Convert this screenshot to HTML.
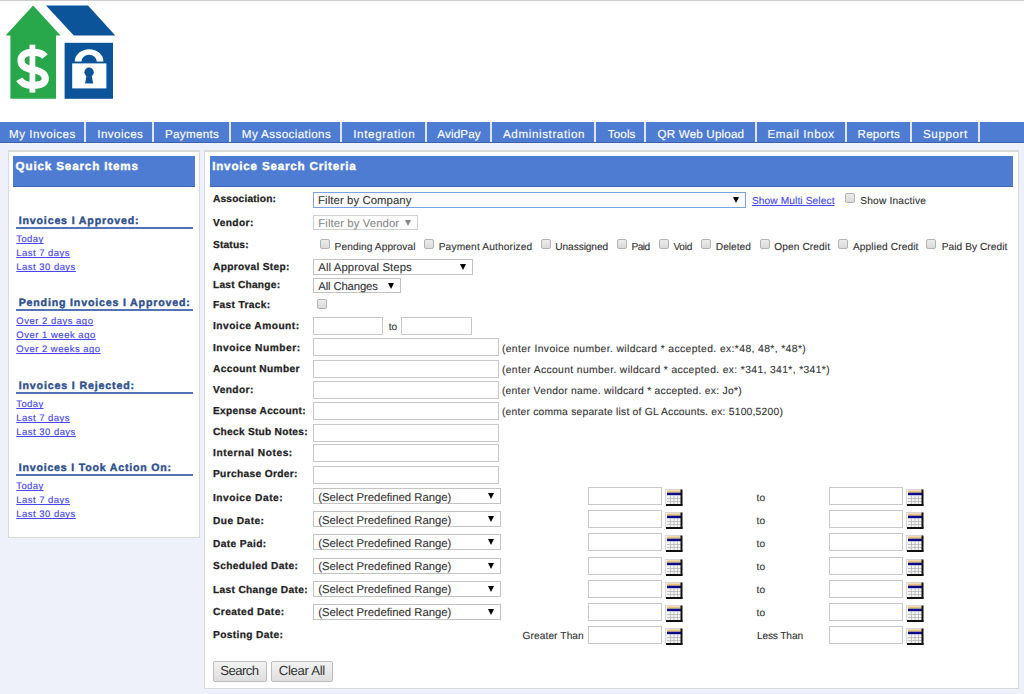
<!DOCTYPE html>
<html><head><meta charset="utf-8"><style>
html,body{margin:0;padding:0}
body{width:1024px;height:694px;overflow:hidden;position:relative;background:#fff;font-family:"Liberation Sans", sans-serif}
.t{position:absolute;white-space:nowrap;line-height:1;text-rendering:geometricPrecision}
.b{position:absolute}
</style></head><body>
<div class="b" style="left:0px;top:0px;width:1024px;height:1px;background:#cccccc"></div>
<svg class="b" style="left:0;top:0" width="120" height="104" viewBox="0 0 120 104">
<polygon fill="#28a84a" points="33.1,5.5 60.6,35.4 56,35.4 56,98.8 10.4,98.8 10.4,35.4 5.6,35.4"/>
<polygon fill="#0c5499" points="46,5.6 88,5.6 115.3,35.4 73.8,35.4"/>
<rect fill="#0c5499" x="64.6" y="42.8" width="48.4" height="56"/>
<path fill="#fff" d="M74.8,61.4 A14.3,12.2 0 0 1 103.4,61.4 L96.7,61.4 A7.6,6.6 0 0 0 81.5,61.4 Z"/>
<rect fill="#fff" x="72.2" y="63.4" width="34.2" height="25"/>
<circle fill="#0c5499" cx="89.1" cy="72.3" r="4.7"/>
<polygon fill="#0c5499" points="86.8,74 91.4,74 93.2,83.5 85,83.5"/>
<path fill="none" stroke="#fff" stroke-width="7.1" d="M45,56.5 C42.5,53.5 38,52.3 32.5,52.3 C25,52.3 21,55.5 21,60.5 C21,66 25,68 32.5,69.6 C41,71.2 45.3,73.5 45.3,78.6 C45.3,83.5 40,85.4 32.5,85.4 C26,85.4 21.5,83 19.3,79.2"/>
<rect fill="#fff" x="29.5" y="44.7" width="5.8" height="47.9"/>
</svg>
<div class="b" style="left:0px;top:143px;width:1024px;height:551px;background:#eef1fa"></div>
<div class="b" style="left:0px;top:122px;width:1024px;height:20px;background:#4e7cd2"></div>
<div class="b" style="left:0px;top:142px;width:1024px;height:1px;background:#3c63b0"></div>
<div class="b" style="left:84px;top:122px;width:2px;height:20px;background:#dfe5f5"></div>
<div class="b" style="left:152px;top:122px;width:2px;height:20px;background:#dfe5f5"></div>
<div class="b" style="left:229px;top:122px;width:2px;height:20px;background:#dfe5f5"></div>
<div class="b" style="left:340px;top:122px;width:2px;height:20px;background:#dfe5f5"></div>
<div class="b" style="left:425px;top:122px;width:2px;height:20px;background:#dfe5f5"></div>
<div class="b" style="left:490px;top:122px;width:2px;height:20px;background:#dfe5f5"></div>
<div class="b" style="left:594px;top:122px;width:2px;height:20px;background:#dfe5f5"></div>
<div class="b" style="left:644px;top:122px;width:2px;height:20px;background:#dfe5f5"></div>
<div class="b" style="left:755px;top:122px;width:2px;height:20px;background:#dfe5f5"></div>
<div class="b" style="left:845px;top:122px;width:2px;height:20px;background:#dfe5f5"></div>
<div class="b" style="left:910px;top:122px;width:2px;height:20px;background:#dfe5f5"></div>
<div class="b" style="left:978px;top:122px;width:2px;height:20px;background:#dfe5f5"></div>
<div class="t" style="left:9.00px;top:128.96px;font-size:11.63px;font-weight:normal;letter-spacing:0.5px;color:#fff;-webkit-text-stroke:0.15px #fff;">My Invoices</div>
<div class="t" style="left:97.30px;top:128.96px;font-size:11.63px;font-weight:normal;letter-spacing:0.421px;color:#fff;-webkit-text-stroke:0.15px #fff;">Invoices</div>
<div class="t" style="left:165.00px;top:128.96px;font-size:11.63px;font-weight:normal;letter-spacing:0.314px;color:#fff;-webkit-text-stroke:0.15px #fff;">Payments</div>
<div class="t" style="left:241.80px;top:128.96px;font-size:11.63px;font-weight:normal;letter-spacing:0.4px;color:#fff;-webkit-text-stroke:0.15px #fff;">My Associations</div>
<div class="t" style="left:353.20px;top:128.96px;font-size:11.63px;font-weight:normal;letter-spacing:0.655px;color:#fff;-webkit-text-stroke:0.15px #fff;">Integration</div>
<div class="t" style="left:437.30px;top:128.96px;font-size:11.63px;font-weight:normal;letter-spacing:0.158px;color:#fff;-webkit-text-stroke:0.15px #fff;">AvidPay</div>
<div class="t" style="left:503.00px;top:128.96px;font-size:11.63px;font-weight:normal;letter-spacing:0.6px;color:#fff;-webkit-text-stroke:0.15px #fff;">Administration</div>
<div class="t" style="left:607.80px;top:128.96px;font-size:11.63px;font-weight:normal;letter-spacing:0.125px;color:#fff;-webkit-text-stroke:0.15px #fff;">Tools</div>
<div class="t" style="left:657.60px;top:128.96px;font-size:11.63px;font-weight:normal;letter-spacing:0.167px;color:#fff;-webkit-text-stroke:0.15px #fff;">QR Web Upload</div>
<div class="t" style="left:767.50px;top:128.96px;font-size:11.63px;font-weight:normal;letter-spacing:0.585px;color:#fff;-webkit-text-stroke:0.15px #fff;">Email Inbox</div>
<div class="t" style="left:857.50px;top:128.96px;font-size:11.63px;font-weight:normal;letter-spacing:0.25px;color:#fff;-webkit-text-stroke:0.15px #fff;">Reports</div>
<div class="t" style="left:923.00px;top:128.96px;font-size:11.63px;font-weight:normal;letter-spacing:0.583px;color:#fff;-webkit-text-stroke:0.15px #fff;">Support</div>
<div class="b" style="left:8px;top:150px;width:192px;height:388px;background:#fff;border:1px solid #d9d9d9;border-top-width:2px;box-sizing:border-box"></div>
<div class="b" style="left:13px;top:156px;width:182px;height:31px;background:#4e7cd2;border-bottom:1px solid #3c63b0;box-sizing:border-box"></div>
<div class="t" style="left:15.60px;top:161.36px;font-size:11.63px;font-weight:bold;letter-spacing:0.853px;color:#fff;-webkit-text-stroke:0.4px #fff;">Quick Search Items</div>
<div class="t" style="left:18.70px;top:215.82px;font-size:10.61px;font-weight:bold;letter-spacing:0.839px;color:#2d4f8e;-webkit-text-stroke:0.4px #2d4f8e;">Invoices I Approved:</div>
<div class="b" style="left:16px;top:227px;width:177px;height:2px;background:#5473b5"></div>
<div class="t" style="left:16.30px;top:234.70px;font-size:9.45px;font-weight:normal;letter-spacing:0.413px;color:#4646ee;-webkit-text-stroke:0.15px #4646ee;text-decoration:underline;text-decoration-skip-ink:none">Today</div>
<div class="t" style="left:16.30px;top:249.00px;font-size:9.45px;font-weight:normal;letter-spacing:0.485px;color:#4646ee;-webkit-text-stroke:0.15px #4646ee;text-decoration:underline;text-decoration-skip-ink:none">Last 7 days</div>
<div class="t" style="left:16.30px;top:263.30px;font-size:9.45px;font-weight:normal;letter-spacing:0.5px;color:#4646ee;-webkit-text-stroke:0.15px #4646ee;text-decoration:underline;text-decoration-skip-ink:none">Last 30 days</div>
<div class="t" style="left:18.70px;top:297.92px;font-size:10.61px;font-weight:bold;letter-spacing:0.826px;color:#2d4f8e;-webkit-text-stroke:0.4px #2d4f8e;">Pending Invoices I Approved:</div>
<div class="b" style="left:16px;top:309px;width:177px;height:2px;background:#5473b5"></div>
<div class="t" style="left:16.30px;top:316.80px;font-size:9.45px;font-weight:normal;letter-spacing:0.525px;color:#4646ee;-webkit-text-stroke:0.15px #4646ee;text-decoration:underline;text-decoration-skip-ink:none">Over 2 days ago</div>
<div class="t" style="left:16.30px;top:331.10px;font-size:9.45px;font-weight:normal;letter-spacing:0.539px;color:#4646ee;-webkit-text-stroke:0.15px #4646ee;text-decoration:underline;text-decoration-skip-ink:none">Over 1 week ago</div>
<div class="t" style="left:16.30px;top:345.40px;font-size:9.45px;font-weight:normal;letter-spacing:0.517px;color:#4646ee;-webkit-text-stroke:0.15px #4646ee;text-decoration:underline;text-decoration-skip-ink:none">Over 2 weeks ago</div>
<div class="t" style="left:18.70px;top:380.92px;font-size:10.61px;font-weight:bold;letter-spacing:0.861px;color:#2d4f8e;-webkit-text-stroke:0.4px #2d4f8e;">Invoices I Rejected:</div>
<div class="b" style="left:16px;top:392px;width:177px;height:2px;background:#5473b5"></div>
<div class="t" style="left:16.30px;top:399.80px;font-size:9.45px;font-weight:normal;letter-spacing:0.413px;color:#4646ee;-webkit-text-stroke:0.15px #4646ee;text-decoration:underline;text-decoration-skip-ink:none">Today</div>
<div class="t" style="left:16.30px;top:414.10px;font-size:9.45px;font-weight:normal;letter-spacing:0.485px;color:#4646ee;-webkit-text-stroke:0.15px #4646ee;text-decoration:underline;text-decoration-skip-ink:none">Last 7 days</div>
<div class="t" style="left:16.30px;top:428.40px;font-size:9.45px;font-weight:normal;letter-spacing:0.5px;color:#4646ee;-webkit-text-stroke:0.15px #4646ee;text-decoration:underline;text-decoration-skip-ink:none">Last 30 days</div>
<div class="t" style="left:18.70px;top:462.92px;font-size:10.61px;font-weight:bold;letter-spacing:0.792px;color:#2d4f8e;-webkit-text-stroke:0.4px #2d4f8e;">Invoices I Took Action On:</div>
<div class="b" style="left:16px;top:474px;width:177px;height:2px;background:#5473b5"></div>
<div class="t" style="left:16.30px;top:481.80px;font-size:9.45px;font-weight:normal;letter-spacing:0.413px;color:#4646ee;-webkit-text-stroke:0.15px #4646ee;text-decoration:underline;text-decoration-skip-ink:none">Today</div>
<div class="t" style="left:16.30px;top:496.10px;font-size:9.45px;font-weight:normal;letter-spacing:0.485px;color:#4646ee;-webkit-text-stroke:0.15px #4646ee;text-decoration:underline;text-decoration-skip-ink:none">Last 7 days</div>
<div class="t" style="left:16.30px;top:510.40px;font-size:9.45px;font-weight:normal;letter-spacing:0.5px;color:#4646ee;-webkit-text-stroke:0.15px #4646ee;text-decoration:underline;text-decoration-skip-ink:none">Last 30 days</div>
<div class="b" style="left:204px;top:150px;width:815px;height:539px;background:#fff;border:1px solid #d9d9d9;border-top-width:2px;box-sizing:border-box"></div>
<div class="b" style="left:210px;top:156px;width:803px;height:31px;background:#4e7cd2;border-bottom:1px solid #3c63b0;box-sizing:border-box"></div>
<div class="t" style="left:212.20px;top:161.36px;font-size:11.63px;font-weight:bold;letter-spacing:0.802px;color:#fff;-webkit-text-stroke:0.4px #fff;">Invoice Search Criteria</div>
<div class="t" style="left:213.00px;top:195.09px;font-size:10.17px;font-weight:bold;letter-spacing:0.182px;color:#222;-webkit-text-stroke:0.25px #222;">Association:</div>
<div class="t" style="left:213.00px;top:218.59px;font-size:10.17px;font-weight:bold;letter-spacing:0.417px;color:#222;-webkit-text-stroke:0.25px #222;">Vendor:</div>
<div class="t" style="left:213.00px;top:240.99px;font-size:10.17px;font-weight:bold;letter-spacing:0.183px;color:#222;-webkit-text-stroke:0.25px #222;">Status:</div>
<div class="t" style="left:213.00px;top:262.79px;font-size:10.17px;font-weight:bold;letter-spacing:0.315px;color:#222;-webkit-text-stroke:0.25px #222;">Approval Step:</div>
<div class="t" style="left:213.00px;top:281.39px;font-size:10.17px;font-weight:bold;letter-spacing:0.245px;color:#222;-webkit-text-stroke:0.25px #222;">Last Change:</div>
<div class="t" style="left:213.00px;top:301.29px;font-size:10.17px;font-weight:bold;letter-spacing:0.34px;color:#222;-webkit-text-stroke:0.25px #222;">Fast Track:</div>
<div class="t" style="left:213.00px;top:322.29px;font-size:10.17px;font-weight:bold;letter-spacing:0.489px;color:#222;-webkit-text-stroke:0.25px #222;">Invoice Amount:</div>
<div class="t" style="left:213.00px;top:343.69px;font-size:10.17px;font-weight:bold;letter-spacing:0.532px;color:#222;-webkit-text-stroke:0.25px #222;">Invoice Number:</div>
<div class="t" style="left:213.00px;top:364.69px;font-size:10.17px;font-weight:bold;letter-spacing:0.358px;color:#222;-webkit-text-stroke:0.25px #222;">Account Number</div>
<div class="t" style="left:213.00px;top:385.59px;font-size:10.17px;font-weight:bold;letter-spacing:0.417px;color:#222;-webkit-text-stroke:0.25px #222;">Vendor:</div>
<div class="t" style="left:213.00px;top:407.29px;font-size:10.17px;font-weight:bold;letter-spacing:0.287px;color:#222;-webkit-text-stroke:0.25px #222;">Expense Account:</div>
<div class="t" style="left:213.00px;top:428.29px;font-size:10.17px;font-weight:bold;letter-spacing:0.266px;color:#222;-webkit-text-stroke:0.25px #222;">Check Stub Notes:</div>
<div class="t" style="left:213.00px;top:448.99px;font-size:10.17px;font-weight:bold;letter-spacing:0.582px;color:#222;-webkit-text-stroke:0.25px #222;">Internal Notes:</div>
<div class="t" style="left:213.00px;top:470.19px;font-size:10.17px;font-weight:bold;letter-spacing:0.346px;color:#222;-webkit-text-stroke:0.25px #222;">Purchase Order:</div>
<div class="t" style="left:213.00px;top:493.59px;font-size:10.17px;font-weight:bold;letter-spacing:0.533px;color:#222;-webkit-text-stroke:0.25px #222;">Invoice Date:</div>
<div class="t" style="left:213.00px;top:516.69px;font-size:10.17px;font-weight:bold;letter-spacing:0.45px;color:#222;-webkit-text-stroke:0.25px #222;">Due Date:</div>
<div class="t" style="left:213.00px;top:539.59px;font-size:10.17px;font-weight:bold;letter-spacing:0.394px;color:#222;-webkit-text-stroke:0.25px #222;">Date Paid:</div>
<div class="t" style="left:213.00px;top:562.29px;font-size:10.17px;font-weight:bold;letter-spacing:0.375px;color:#222;-webkit-text-stroke:0.25px #222;">Scheduled Date:</div>
<div class="t" style="left:213.00px;top:585.69px;font-size:10.17px;font-weight:bold;letter-spacing:0.338px;color:#222;-webkit-text-stroke:0.25px #222;">Last Change Date:</div>
<div class="t" style="left:213.00px;top:608.49px;font-size:10.17px;font-weight:bold;letter-spacing:0.425px;color:#222;-webkit-text-stroke:0.25px #222;">Created Date:</div>
<div class="t" style="left:213.00px;top:631.49px;font-size:10.17px;font-weight:bold;letter-spacing:0.367px;color:#222;-webkit-text-stroke:0.25px #222;">Posting Date:</div>
<div class="b" style="left:313px;top:192px;width:433px;height:16px;background:#fff;border:1px solid #7aa3e6;box-sizing:border-box"></div>
<div class="t" style="left:318.10px;top:196.30px;font-size:11.34px;font-weight:normal;letter-spacing:0.088px;color:#333;-webkit-text-stroke:0.1px #333;">Filter by Company</div>
<div class="b" style="left:733px;top:197px;width:0;height:0;border-left:3px solid transparent;border-right:3px solid transparent;border-top:6px solid #000"></div>
<div class="t" style="left:751.90px;top:197.09px;font-size:10.17px;font-weight:normal;letter-spacing:0.116px;color:#4646ee;-webkit-text-stroke:0.12px #4646ee;text-decoration:underline;text-decoration-skip-ink:none">Show Multi Select</div>
<div class="b" style="left:845px;top:193px;width:10px;height:10px;background:linear-gradient(#ececec,#dadada);border:1px solid #b3b3b3;border-radius:2px;box-sizing:border-box"></div>
<div class="t" style="left:860.30px;top:197.09px;font-size:10.17px;font-weight:normal;letter-spacing:0.192px;color:#333;-webkit-text-stroke:0.12px #333;">Show Inactive</div>
<div class="b" style="left:313px;top:215px;width:105px;height:15px;background:#fff;border:1px solid #d0d0d0;box-sizing:border-box"></div>
<div class="t" style="left:318.30px;top:218.60px;font-size:11.34px;font-weight:normal;letter-spacing:0.1px;color:#8a8a8a;-webkit-text-stroke:0.1px #8a8a8a;">Filter by Vendor</div>
<div class="b" style="left:405px;top:220px;width:0;height:0;border-left:3px solid transparent;border-right:3px solid transparent;border-top:6px solid #888"></div>
<div class="b" style="left:320px;top:239px;width:10px;height:10px;background:linear-gradient(#ececec,#dadada);border:1px solid #b3b3b3;border-radius:2px;box-sizing:border-box"></div>
<div class="t" style="left:334.60px;top:242.89px;font-size:10.17px;font-weight:normal;letter-spacing:0.083px;color:#333;-webkit-text-stroke:0.12px #333;">Pending Approval</div>
<div class="b" style="left:424px;top:239px;width:10px;height:10px;background:linear-gradient(#ececec,#dadada);border:1px solid #b3b3b3;border-radius:2px;box-sizing:border-box"></div>
<div class="t" style="left:438.70px;top:242.89px;font-size:10.17px;font-weight:normal;letter-spacing:0.156px;color:#333;-webkit-text-stroke:0.12px #333;">Payment Authorized</div>
<div class="b" style="left:541px;top:239px;width:10px;height:10px;background:linear-gradient(#ececec,#dadada);border:1px solid #b3b3b3;border-radius:2px;box-sizing:border-box"></div>
<div class="t" style="left:555.30px;top:242.89px;font-size:10.17px;font-weight:normal;letter-spacing:-0.089px;color:#333;-webkit-text-stroke:0.12px #333;">Unassigned</div>
<div class="b" style="left:617px;top:239px;width:10px;height:10px;background:linear-gradient(#ececec,#dadada);border:1px solid #b3b3b3;border-radius:2px;box-sizing:border-box"></div>
<div class="t" style="left:631.50px;top:242.89px;font-size:10.17px;font-weight:normal;letter-spacing:-0.6px;color:#333;-webkit-text-stroke:0.12px #333;">Paid</div>
<div class="b" style="left:659px;top:239px;width:10px;height:10px;background:linear-gradient(#ececec,#dadada);border:1px solid #b3b3b3;border-radius:2px;box-sizing:border-box"></div>
<div class="t" style="left:673.40px;top:242.89px;font-size:10.17px;font-weight:normal;letter-spacing:-0.25px;color:#333;-webkit-text-stroke:0.12px #333;">Void</div>
<div class="b" style="left:701px;top:239px;width:10px;height:10px;background:linear-gradient(#ececec,#dadada);border:1px solid #b3b3b3;border-radius:2px;box-sizing:border-box"></div>
<div class="t" style="left:715.80px;top:242.89px;font-size:10.17px;font-weight:normal;letter-spacing:0.0px;color:#333;-webkit-text-stroke:0.12px #333;">Deleted</div>
<div class="b" style="left:760px;top:239px;width:10px;height:10px;background:linear-gradient(#ececec,#dadada);border:1px solid #b3b3b3;border-radius:2px;box-sizing:border-box"></div>
<div class="t" style="left:774.20px;top:242.89px;font-size:10.17px;font-weight:normal;letter-spacing:0.105px;color:#333;-webkit-text-stroke:0.12px #333;">Open Credit</div>
<div class="b" style="left:838px;top:239px;width:10px;height:10px;background:linear-gradient(#ececec,#dadada);border:1px solid #b3b3b3;border-radius:2px;box-sizing:border-box"></div>
<div class="t" style="left:852.90px;top:242.89px;font-size:10.17px;font-weight:normal;letter-spacing:0.135px;color:#333;-webkit-text-stroke:0.12px #333;">Applied Credit</div>
<div class="b" style="left:926px;top:239px;width:10px;height:10px;background:linear-gradient(#ececec,#dadada);border:1px solid #b3b3b3;border-radius:2px;box-sizing:border-box"></div>
<div class="t" style="left:941.80px;top:242.89px;font-size:10.17px;font-weight:normal;letter-spacing:0.046px;color:#333;-webkit-text-stroke:0.12px #333;">Paid By Credit</div>
<div class="b" style="left:313px;top:259px;width:160px;height:16px;background:#fff;border:1px solid #c3c3c3;box-sizing:border-box"></div>
<div class="t" style="left:318.30px;top:262.70px;font-size:11.34px;font-weight:normal;letter-spacing:0.088px;color:#333;-webkit-text-stroke:0.1px #333;">All Approval Steps</div>
<div class="b" style="left:460px;top:264px;width:0;height:0;border-left:3px solid transparent;border-right:3px solid transparent;border-top:6px solid #000"></div>
<div class="b" style="left:313px;top:278px;width:88px;height:15px;background:#fff;border:1px solid #c3c3c3;box-sizing:border-box"></div>
<div class="t" style="left:318.30px;top:282.10px;font-size:11.34px;font-weight:normal;letter-spacing:-0.15px;color:#333;-webkit-text-stroke:0.1px #333;">All Changes</div>
<div class="b" style="left:388px;top:283px;width:0;height:0;border-left:3px solid transparent;border-right:3px solid transparent;border-top:6px solid #000"></div>
<div class="b" style="left:317px;top:299px;width:10px;height:10px;background:linear-gradient(#ececec,#dadada);border:1px solid #b3b3b3;border-radius:2px;box-sizing:border-box"></div>
<div class="b" style="left:313px;top:317px;width:70px;height:18px;background:#fff;border:1px solid #c8c8c8;box-sizing:border-box"></div>
<div class="t" style="left:388.70px;top:322.59px;font-size:10.17px;font-weight:normal;letter-spacing:0.05px;color:#333;-webkit-text-stroke:0.12px #333;">to</div>
<div class="b" style="left:401px;top:317px;width:71px;height:18px;background:#fff;border:1px solid #c8c8c8;box-sizing:border-box"></div>
<div class="b" style="left:313px;top:338px;width:186px;height:18px;background:#fff;border:1px solid #c8c8c8;box-sizing:border-box"></div>
<div class="t" style="left:501.90px;top:344.66px;font-size:10.32px;font-weight:normal;letter-spacing:0.395px;color:#333;-webkit-text-stroke:0.12px #333;">(enter Invoice number. wildcard * accepted. ex:*48, 48*, *48*)</div>
<div class="b" style="left:313px;top:360px;width:186px;height:18px;background:#fff;border:1px solid #c8c8c8;box-sizing:border-box"></div>
<div class="t" style="left:501.90px;top:365.66px;font-size:10.32px;font-weight:normal;letter-spacing:0.368px;color:#333;-webkit-text-stroke:0.12px #333;">(enter Account number. wildcard * accepted. ex: *341, 341*, *341*)</div>
<div class="b" style="left:313px;top:381px;width:186px;height:18px;background:#fff;border:1px solid #c8c8c8;box-sizing:border-box"></div>
<div class="t" style="left:501.90px;top:386.56px;font-size:10.32px;font-weight:normal;letter-spacing:0.267px;color:#333;-webkit-text-stroke:0.12px #333;">(enter Vendor name. wildcard * accepted. ex: Jo*)</div>
<div class="b" style="left:313px;top:402px;width:186px;height:18px;background:#fff;border:1px solid #c8c8c8;box-sizing:border-box"></div>
<div class="t" style="left:501.90px;top:408.26px;font-size:10.32px;font-weight:normal;letter-spacing:0.213px;color:#333;-webkit-text-stroke:0.12px #333;">(enter comma separate list of GL Accounts. ex: 5100,5200)</div>
<div class="b" style="left:313px;top:424px;width:186px;height:18px;background:#fff;border:1px solid #c8c8c8;box-sizing:border-box"></div>
<div class="b" style="left:313px;top:444px;width:186px;height:18px;background:#fff;border:1px solid #c8c8c8;box-sizing:border-box"></div>
<div class="b" style="left:313px;top:466px;width:186px;height:18px;background:#fff;border:1px solid #c8c8c8;box-sizing:border-box"></div>
<div class="b" style="left:313px;top:488px;width:188px;height:16px;background:#fff;border:1px solid #c3c3c3;box-sizing:border-box"></div>
<div class="t" style="left:318.30px;top:492.70px;font-size:11.34px;font-weight:normal;letter-spacing:-0.019px;color:#333;-webkit-text-stroke:0.1px #333;">(Select Predefined Range)</div>
<div class="b" style="left:488px;top:493px;width:0;height:0;border-left:3px solid transparent;border-right:3px solid transparent;border-top:6px solid #000"></div>
<div class="b" style="left:588px;top:487px;width:74px;height:18px;background:#fff;border:1px solid #c8c8c8;box-sizing:border-box"></div>
<svg class="b" style="left:665px;top:489px" width="18" height="17" viewBox="0 0 18 17">
<rect x="0" y="0" width="17" height="16" fill="#d8d8d8"/>
<rect x="1" y="1" width="15" height="14" fill="#f4f4f4"/>
<rect x="2" y="1.5" width="14" height="2.2" fill="#e8c47a"/>
<rect x="2" y="3.7" width="14" height="2.5" fill="#0a0a8a"/>
<g stroke="#b8b8b8" stroke-width="0.8"><line x1="5.5" y1="6" x2="5.5" y2="15"/><line x1="9" y1="6" x2="9" y2="15"/><line x1="12.5" y1="6" x2="12.5" y2="15"/><line x1="2" y1="9.5" x2="16" y2="9.5"/><line x1="2" y1="12.5" x2="16" y2="12.5"/></g>
<rect x="15.5" y="0.5" width="2" height="16" fill="#111"/>
<rect x="1" y="15" width="16.5" height="2" fill="#111"/>
</svg>
<div class="t" style="left:756.60px;top:493.69px;font-size:10.17px;font-weight:normal;letter-spacing:0.05px;color:#333;-webkit-text-stroke:0.12px #333;">to</div>
<div class="b" style="left:829px;top:487px;width:74px;height:18px;background:#fff;border:1px solid #c8c8c8;box-sizing:border-box"></div>
<svg class="b" style="left:906px;top:489px" width="18" height="17" viewBox="0 0 18 17">
<rect x="0" y="0" width="17" height="16" fill="#d8d8d8"/>
<rect x="1" y="1" width="15" height="14" fill="#f4f4f4"/>
<rect x="2" y="1.5" width="14" height="2.2" fill="#e8c47a"/>
<rect x="2" y="3.7" width="14" height="2.5" fill="#0a0a8a"/>
<g stroke="#b8b8b8" stroke-width="0.8"><line x1="5.5" y1="6" x2="5.5" y2="15"/><line x1="9" y1="6" x2="9" y2="15"/><line x1="12.5" y1="6" x2="12.5" y2="15"/><line x1="2" y1="9.5" x2="16" y2="9.5"/><line x1="2" y1="12.5" x2="16" y2="12.5"/></g>
<rect x="15.5" y="0.5" width="2" height="16" fill="#111"/>
<rect x="1" y="15" width="16.5" height="2" fill="#111"/>
</svg>
<div class="b" style="left:313px;top:511px;width:188px;height:16px;background:#fff;border:1px solid #c3c3c3;box-sizing:border-box"></div>
<div class="t" style="left:318.30px;top:515.75px;font-size:11.34px;font-weight:normal;letter-spacing:-0.019px;color:#333;-webkit-text-stroke:0.1px #333;">(Select Predefined Range)</div>
<div class="b" style="left:488px;top:516px;width:0;height:0;border-left:3px solid transparent;border-right:3px solid transparent;border-top:6px solid #000"></div>
<div class="b" style="left:588px;top:510px;width:74px;height:18px;background:#fff;border:1px solid #c8c8c8;box-sizing:border-box"></div>
<svg class="b" style="left:665px;top:512px" width="18" height="17" viewBox="0 0 18 17">
<rect x="0" y="0" width="17" height="16" fill="#d8d8d8"/>
<rect x="1" y="1" width="15" height="14" fill="#f4f4f4"/>
<rect x="2" y="1.5" width="14" height="2.2" fill="#e8c47a"/>
<rect x="2" y="3.7" width="14" height="2.5" fill="#0a0a8a"/>
<g stroke="#b8b8b8" stroke-width="0.8"><line x1="5.5" y1="6" x2="5.5" y2="15"/><line x1="9" y1="6" x2="9" y2="15"/><line x1="12.5" y1="6" x2="12.5" y2="15"/><line x1="2" y1="9.5" x2="16" y2="9.5"/><line x1="2" y1="12.5" x2="16" y2="12.5"/></g>
<rect x="15.5" y="0.5" width="2" height="16" fill="#111"/>
<rect x="1" y="15" width="16.5" height="2" fill="#111"/>
</svg>
<div class="t" style="left:756.60px;top:516.74px;font-size:10.17px;font-weight:normal;letter-spacing:0.05px;color:#333;-webkit-text-stroke:0.12px #333;">to</div>
<div class="b" style="left:829px;top:510px;width:74px;height:18px;background:#fff;border:1px solid #c8c8c8;box-sizing:border-box"></div>
<svg class="b" style="left:906px;top:512px" width="18" height="17" viewBox="0 0 18 17">
<rect x="0" y="0" width="17" height="16" fill="#d8d8d8"/>
<rect x="1" y="1" width="15" height="14" fill="#f4f4f4"/>
<rect x="2" y="1.5" width="14" height="2.2" fill="#e8c47a"/>
<rect x="2" y="3.7" width="14" height="2.5" fill="#0a0a8a"/>
<g stroke="#b8b8b8" stroke-width="0.8"><line x1="5.5" y1="6" x2="5.5" y2="15"/><line x1="9" y1="6" x2="9" y2="15"/><line x1="12.5" y1="6" x2="12.5" y2="15"/><line x1="2" y1="9.5" x2="16" y2="9.5"/><line x1="2" y1="12.5" x2="16" y2="12.5"/></g>
<rect x="15.5" y="0.5" width="2" height="16" fill="#111"/>
<rect x="1" y="15" width="16.5" height="2" fill="#111"/>
</svg>
<div class="b" style="left:313px;top:534px;width:188px;height:16px;background:#fff;border:1px solid #c3c3c3;box-sizing:border-box"></div>
<div class="t" style="left:318.30px;top:538.80px;font-size:11.34px;font-weight:normal;letter-spacing:-0.019px;color:#333;-webkit-text-stroke:0.1px #333;">(Select Predefined Range)</div>
<div class="b" style="left:488px;top:539px;width:0;height:0;border-left:3px solid transparent;border-right:3px solid transparent;border-top:6px solid #000"></div>
<div class="b" style="left:588px;top:533px;width:74px;height:18px;background:#fff;border:1px solid #c8c8c8;box-sizing:border-box"></div>
<svg class="b" style="left:665px;top:535px" width="18" height="17" viewBox="0 0 18 17">
<rect x="0" y="0" width="17" height="16" fill="#d8d8d8"/>
<rect x="1" y="1" width="15" height="14" fill="#f4f4f4"/>
<rect x="2" y="1.5" width="14" height="2.2" fill="#e8c47a"/>
<rect x="2" y="3.7" width="14" height="2.5" fill="#0a0a8a"/>
<g stroke="#b8b8b8" stroke-width="0.8"><line x1="5.5" y1="6" x2="5.5" y2="15"/><line x1="9" y1="6" x2="9" y2="15"/><line x1="12.5" y1="6" x2="12.5" y2="15"/><line x1="2" y1="9.5" x2="16" y2="9.5"/><line x1="2" y1="12.5" x2="16" y2="12.5"/></g>
<rect x="15.5" y="0.5" width="2" height="16" fill="#111"/>
<rect x="1" y="15" width="16.5" height="2" fill="#111"/>
</svg>
<div class="t" style="left:756.60px;top:539.79px;font-size:10.17px;font-weight:normal;letter-spacing:0.05px;color:#333;-webkit-text-stroke:0.12px #333;">to</div>
<div class="b" style="left:829px;top:533px;width:74px;height:18px;background:#fff;border:1px solid #c8c8c8;box-sizing:border-box"></div>
<svg class="b" style="left:906px;top:535px" width="18" height="17" viewBox="0 0 18 17">
<rect x="0" y="0" width="17" height="16" fill="#d8d8d8"/>
<rect x="1" y="1" width="15" height="14" fill="#f4f4f4"/>
<rect x="2" y="1.5" width="14" height="2.2" fill="#e8c47a"/>
<rect x="2" y="3.7" width="14" height="2.5" fill="#0a0a8a"/>
<g stroke="#b8b8b8" stroke-width="0.8"><line x1="5.5" y1="6" x2="5.5" y2="15"/><line x1="9" y1="6" x2="9" y2="15"/><line x1="12.5" y1="6" x2="12.5" y2="15"/><line x1="2" y1="9.5" x2="16" y2="9.5"/><line x1="2" y1="12.5" x2="16" y2="12.5"/></g>
<rect x="15.5" y="0.5" width="2" height="16" fill="#111"/>
<rect x="1" y="15" width="16.5" height="2" fill="#111"/>
</svg>
<div class="b" style="left:313px;top:558px;width:188px;height:16px;background:#fff;border:1px solid #c3c3c3;box-sizing:border-box"></div>
<div class="t" style="left:318.30px;top:561.85px;font-size:11.34px;font-weight:normal;letter-spacing:-0.019px;color:#333;-webkit-text-stroke:0.1px #333;">(Select Predefined Range)</div>
<div class="b" style="left:488px;top:563px;width:0;height:0;border-left:3px solid transparent;border-right:3px solid transparent;border-top:6px solid #000"></div>
<div class="b" style="left:588px;top:557px;width:74px;height:18px;background:#fff;border:1px solid #c8c8c8;box-sizing:border-box"></div>
<svg class="b" style="left:665px;top:559px" width="18" height="17" viewBox="0 0 18 17">
<rect x="0" y="0" width="17" height="16" fill="#d8d8d8"/>
<rect x="1" y="1" width="15" height="14" fill="#f4f4f4"/>
<rect x="2" y="1.5" width="14" height="2.2" fill="#e8c47a"/>
<rect x="2" y="3.7" width="14" height="2.5" fill="#0a0a8a"/>
<g stroke="#b8b8b8" stroke-width="0.8"><line x1="5.5" y1="6" x2="5.5" y2="15"/><line x1="9" y1="6" x2="9" y2="15"/><line x1="12.5" y1="6" x2="12.5" y2="15"/><line x1="2" y1="9.5" x2="16" y2="9.5"/><line x1="2" y1="12.5" x2="16" y2="12.5"/></g>
<rect x="15.5" y="0.5" width="2" height="16" fill="#111"/>
<rect x="1" y="15" width="16.5" height="2" fill="#111"/>
</svg>
<div class="t" style="left:756.60px;top:562.84px;font-size:10.17px;font-weight:normal;letter-spacing:0.05px;color:#333;-webkit-text-stroke:0.12px #333;">to</div>
<div class="b" style="left:829px;top:557px;width:74px;height:18px;background:#fff;border:1px solid #c8c8c8;box-sizing:border-box"></div>
<svg class="b" style="left:906px;top:559px" width="18" height="17" viewBox="0 0 18 17">
<rect x="0" y="0" width="17" height="16" fill="#d8d8d8"/>
<rect x="1" y="1" width="15" height="14" fill="#f4f4f4"/>
<rect x="2" y="1.5" width="14" height="2.2" fill="#e8c47a"/>
<rect x="2" y="3.7" width="14" height="2.5" fill="#0a0a8a"/>
<g stroke="#b8b8b8" stroke-width="0.8"><line x1="5.5" y1="6" x2="5.5" y2="15"/><line x1="9" y1="6" x2="9" y2="15"/><line x1="12.5" y1="6" x2="12.5" y2="15"/><line x1="2" y1="9.5" x2="16" y2="9.5"/><line x1="2" y1="12.5" x2="16" y2="12.5"/></g>
<rect x="15.5" y="0.5" width="2" height="16" fill="#111"/>
<rect x="1" y="15" width="16.5" height="2" fill="#111"/>
</svg>
<div class="b" style="left:313px;top:581px;width:188px;height:16px;background:#fff;border:1px solid #c3c3c3;box-sizing:border-box"></div>
<div class="t" style="left:318.30px;top:584.90px;font-size:11.34px;font-weight:normal;letter-spacing:-0.019px;color:#333;-webkit-text-stroke:0.1px #333;">(Select Predefined Range)</div>
<div class="b" style="left:488px;top:586px;width:0;height:0;border-left:3px solid transparent;border-right:3px solid transparent;border-top:6px solid #000"></div>
<div class="b" style="left:588px;top:580px;width:74px;height:18px;background:#fff;border:1px solid #c8c8c8;box-sizing:border-box"></div>
<svg class="b" style="left:665px;top:582px" width="18" height="17" viewBox="0 0 18 17">
<rect x="0" y="0" width="17" height="16" fill="#d8d8d8"/>
<rect x="1" y="1" width="15" height="14" fill="#f4f4f4"/>
<rect x="2" y="1.5" width="14" height="2.2" fill="#e8c47a"/>
<rect x="2" y="3.7" width="14" height="2.5" fill="#0a0a8a"/>
<g stroke="#b8b8b8" stroke-width="0.8"><line x1="5.5" y1="6" x2="5.5" y2="15"/><line x1="9" y1="6" x2="9" y2="15"/><line x1="12.5" y1="6" x2="12.5" y2="15"/><line x1="2" y1="9.5" x2="16" y2="9.5"/><line x1="2" y1="12.5" x2="16" y2="12.5"/></g>
<rect x="15.5" y="0.5" width="2" height="16" fill="#111"/>
<rect x="1" y="15" width="16.5" height="2" fill="#111"/>
</svg>
<div class="t" style="left:756.60px;top:585.89px;font-size:10.17px;font-weight:normal;letter-spacing:0.05px;color:#333;-webkit-text-stroke:0.12px #333;">to</div>
<div class="b" style="left:829px;top:580px;width:74px;height:18px;background:#fff;border:1px solid #c8c8c8;box-sizing:border-box"></div>
<svg class="b" style="left:906px;top:582px" width="18" height="17" viewBox="0 0 18 17">
<rect x="0" y="0" width="17" height="16" fill="#d8d8d8"/>
<rect x="1" y="1" width="15" height="14" fill="#f4f4f4"/>
<rect x="2" y="1.5" width="14" height="2.2" fill="#e8c47a"/>
<rect x="2" y="3.7" width="14" height="2.5" fill="#0a0a8a"/>
<g stroke="#b8b8b8" stroke-width="0.8"><line x1="5.5" y1="6" x2="5.5" y2="15"/><line x1="9" y1="6" x2="9" y2="15"/><line x1="12.5" y1="6" x2="12.5" y2="15"/><line x1="2" y1="9.5" x2="16" y2="9.5"/><line x1="2" y1="12.5" x2="16" y2="12.5"/></g>
<rect x="15.5" y="0.5" width="2" height="16" fill="#111"/>
<rect x="1" y="15" width="16.5" height="2" fill="#111"/>
</svg>
<div class="b" style="left:313px;top:604px;width:188px;height:16px;background:#fff;border:1px solid #c3c3c3;box-sizing:border-box"></div>
<div class="t" style="left:318.30px;top:607.95px;font-size:11.34px;font-weight:normal;letter-spacing:-0.019px;color:#333;-webkit-text-stroke:0.1px #333;">(Select Predefined Range)</div>
<div class="b" style="left:488px;top:609px;width:0;height:0;border-left:3px solid transparent;border-right:3px solid transparent;border-top:6px solid #000"></div>
<div class="b" style="left:588px;top:603px;width:74px;height:18px;background:#fff;border:1px solid #c8c8c8;box-sizing:border-box"></div>
<svg class="b" style="left:665px;top:605px" width="18" height="17" viewBox="0 0 18 17">
<rect x="0" y="0" width="17" height="16" fill="#d8d8d8"/>
<rect x="1" y="1" width="15" height="14" fill="#f4f4f4"/>
<rect x="2" y="1.5" width="14" height="2.2" fill="#e8c47a"/>
<rect x="2" y="3.7" width="14" height="2.5" fill="#0a0a8a"/>
<g stroke="#b8b8b8" stroke-width="0.8"><line x1="5.5" y1="6" x2="5.5" y2="15"/><line x1="9" y1="6" x2="9" y2="15"/><line x1="12.5" y1="6" x2="12.5" y2="15"/><line x1="2" y1="9.5" x2="16" y2="9.5"/><line x1="2" y1="12.5" x2="16" y2="12.5"/></g>
<rect x="15.5" y="0.5" width="2" height="16" fill="#111"/>
<rect x="1" y="15" width="16.5" height="2" fill="#111"/>
</svg>
<div class="t" style="left:756.60px;top:608.94px;font-size:10.17px;font-weight:normal;letter-spacing:0.05px;color:#333;-webkit-text-stroke:0.12px #333;">to</div>
<div class="b" style="left:829px;top:603px;width:74px;height:18px;background:#fff;border:1px solid #c8c8c8;box-sizing:border-box"></div>
<svg class="b" style="left:906px;top:605px" width="18" height="17" viewBox="0 0 18 17">
<rect x="0" y="0" width="17" height="16" fill="#d8d8d8"/>
<rect x="1" y="1" width="15" height="14" fill="#f4f4f4"/>
<rect x="2" y="1.5" width="14" height="2.2" fill="#e8c47a"/>
<rect x="2" y="3.7" width="14" height="2.5" fill="#0a0a8a"/>
<g stroke="#b8b8b8" stroke-width="0.8"><line x1="5.5" y1="6" x2="5.5" y2="15"/><line x1="9" y1="6" x2="9" y2="15"/><line x1="12.5" y1="6" x2="12.5" y2="15"/><line x1="2" y1="9.5" x2="16" y2="9.5"/><line x1="2" y1="12.5" x2="16" y2="12.5"/></g>
<rect x="15.5" y="0.5" width="2" height="16" fill="#111"/>
<rect x="1" y="15" width="16.5" height="2" fill="#111"/>
</svg>
<div class="t" style="left:522.50px;top:631.79px;font-size:10.17px;font-weight:normal;letter-spacing:0.095px;color:#333;-webkit-text-stroke:0.12px #333;">Greater Than</div>
<div class="b" style="left:588px;top:626px;width:74px;height:18px;background:#fff;border:1px solid #c8c8c8;box-sizing:border-box"></div>
<svg class="b" style="left:665px;top:628px" width="18" height="17" viewBox="0 0 18 17">
<rect x="0" y="0" width="17" height="16" fill="#d8d8d8"/>
<rect x="1" y="1" width="15" height="14" fill="#f4f4f4"/>
<rect x="2" y="1.5" width="14" height="2.2" fill="#e8c47a"/>
<rect x="2" y="3.7" width="14" height="2.5" fill="#0a0a8a"/>
<g stroke="#b8b8b8" stroke-width="0.8"><line x1="5.5" y1="6" x2="5.5" y2="15"/><line x1="9" y1="6" x2="9" y2="15"/><line x1="12.5" y1="6" x2="12.5" y2="15"/><line x1="2" y1="9.5" x2="16" y2="9.5"/><line x1="2" y1="12.5" x2="16" y2="12.5"/></g>
<rect x="15.5" y="0.5" width="2" height="16" fill="#111"/>
<rect x="1" y="15" width="16.5" height="2" fill="#111"/>
</svg>
<div class="t" style="left:756.90px;top:631.79px;font-size:10.17px;font-weight:normal;letter-spacing:-0.137px;color:#333;-webkit-text-stroke:0.12px #333;">Less Than</div>
<div class="b" style="left:829px;top:626px;width:74px;height:18px;background:#fff;border:1px solid #c8c8c8;box-sizing:border-box"></div>
<svg class="b" style="left:906px;top:628px" width="18" height="17" viewBox="0 0 18 17">
<rect x="0" y="0" width="17" height="16" fill="#d8d8d8"/>
<rect x="1" y="1" width="15" height="14" fill="#f4f4f4"/>
<rect x="2" y="1.5" width="14" height="2.2" fill="#e8c47a"/>
<rect x="2" y="3.7" width="14" height="2.5" fill="#0a0a8a"/>
<g stroke="#b8b8b8" stroke-width="0.8"><line x1="5.5" y1="6" x2="5.5" y2="15"/><line x1="9" y1="6" x2="9" y2="15"/><line x1="12.5" y1="6" x2="12.5" y2="15"/><line x1="2" y1="9.5" x2="16" y2="9.5"/><line x1="2" y1="12.5" x2="16" y2="12.5"/></g>
<rect x="15.5" y="0.5" width="2" height="16" fill="#111"/>
<rect x="1" y="15" width="16.5" height="2" fill="#111"/>
</svg>
<div class="b" style="left:213px;top:661px;width:54px;height:21px;box-sizing:border-box;border:1px solid #bdbdbd;border-radius:2px;background:linear-gradient(#f3f3f3,#dedede)"></div>
<div class="t" style="left:220.30px;top:663.83px;font-size:13.2px;font-weight:normal;letter-spacing:-0.59px;color:#333;">Search</div>
<div class="b" style="left:271px;top:661px;width:62px;height:21px;box-sizing:border-box;border:1px solid #bdbdbd;border-radius:2px;background:linear-gradient(#f3f3f3,#dedede)"></div>
<div class="t" style="left:278.80px;top:663.83px;font-size:13.2px;font-weight:normal;letter-spacing:-0.331px;color:#333;">Clear All</div>
</body></html>
